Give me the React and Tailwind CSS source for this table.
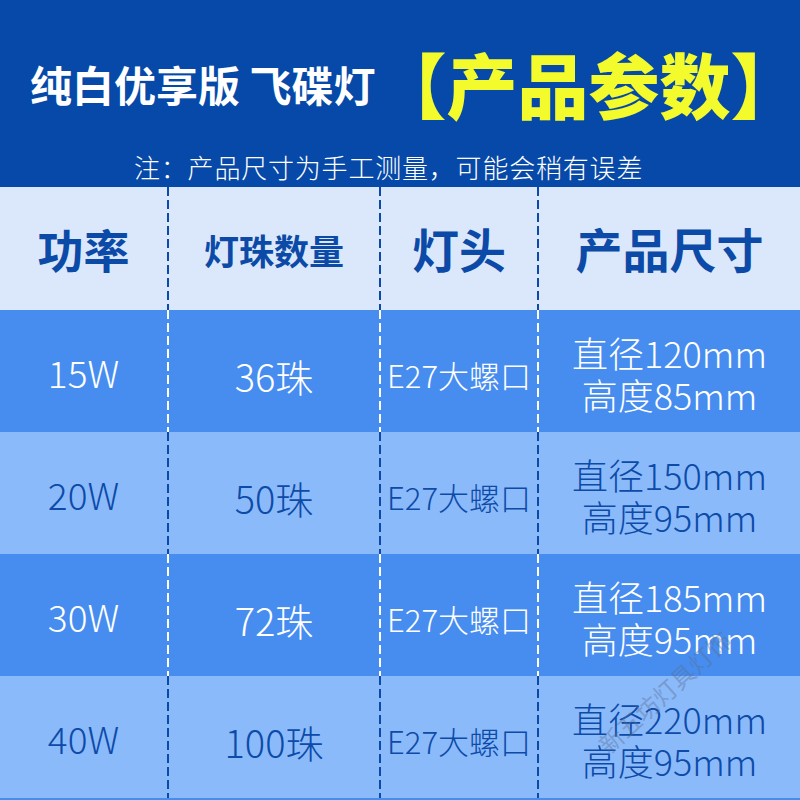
const FONT = { fontFamily: '"Noto Sans CJK SC", "Noto Sans", sans-serif' }

const ROWS = [
  { power: '15W', beads: '36珠', base: 'E27大螺口', d: '直径120mm', h: '高度85mm', dark: true },
  { power: '20W', beads: '50珠', base: 'E27大螺口', d: '直径150mm', h: '高度95mm', dark: false },
  { power: '30W', beads: '72珠', base: 'E27大螺口', d: '直径185mm', h: '高度95mm', dark: true },
  { power: '40W', beads: '100珠', base: 'E27大螺口', d: '直径220mm', h: '高度95mm', dark: false },
]

function Divider({ light }) {
  return (
    <div
      className={
        light
          ? 'w-[2px] self-stretch bg-[repeating-linear-gradient(to_bottom,#ffffff_0_9px,transparent_9px_13px)]'
          : 'w-[2px] self-stretch bg-[repeating-linear-gradient(to_bottom,#0b4aa6_0_9px,transparent_9px_13px)]'
      }
    />
  )
}

function Row({ row }) {
  const text = row.dark ? 'text-white' : 'text-[#0d4ba8]'
  return (
    <div className={`flex h-[122px] ${row.dark ? 'bg-[#478df0]' : 'bg-[#8bbafb]'} ${text} font-light`}>
      <div className="w-[167px] flex items-center justify-center text-[37px] pt-1">{row.power}</div>
      <Divider light={row.dark} />
      <div className="w-[210px] flex items-center justify-center text-[38px] pt-2">{row.beads}</div>
      <Divider light={row.dark} />
      <div className="w-[156px] flex items-center justify-center text-[31px] pt-2 whitespace-nowrap">{row.base}</div>
      <Divider light={row.dark} />
      <div className="flex-1 flex flex-col items-center justify-center text-[36px] leading-[42px] pt-1 whitespace-nowrap">
        <div>{row.d}</div>
        <div>{row.h}</div>
      </div>
    </div>
  )
}

export default function App() {
  return (
    <div className="relative w-[800px] h-[800px] overflow-hidden bg-[#478df0]" style={FONT}>
      {/* Header */}
      <div className="h-[187px] bg-[#0649a8] flex flex-col">
        <div className="flex items-center h-[150px] pl-[30px] pt-[16px]">
          <div className="shrink-0 text-white text-[42px] font-bold whitespace-nowrap">纯白优享版&nbsp;飞碟灯</div>
          <div className="shrink-0 ml-auto mr-[12px] text-[#f4fb2c] text-[71px] font-black leading-[1.2] whitespace-nowrap">【产品参数】</div>
        </div>
        <div className="text-white text-[26px] font-light leading-none pl-[134px] pt-[4px] tracking-[0.8px] whitespace-nowrap">
          注：产品尺寸为手工测量，可能会稍有误差
        </div>
      </div>

      {/* Table head */}
      <div className="flex h-[123px] bg-[#dbe8fb] text-[#0c4aa8] font-bold">
        <div className="w-[167px] flex items-center justify-center text-[46px]">功率</div>
        <Divider />
        <div className="w-[210px] flex items-center justify-center text-[35px] pt-1">灯珠数量</div>
        <Divider />
        <div className="w-[156px] flex items-center justify-center text-[47px]">灯头</div>
        <Divider />
        <div className="flex-1 flex items-center justify-center text-[47px]">产品尺寸</div>
      </div>

      {ROWS.map((r) => (
        <Row key={r.power} row={r} />
      ))}

      {/* watermark */}
      <div className="absolute left-[602px] top-[730px] -rotate-[42deg] origin-left text-[24px] text-[#5a6f8f] opacity-40 whitespace-nowrap">
        新五坊灯具灯饰
      </div>
    </div>
  )
}
